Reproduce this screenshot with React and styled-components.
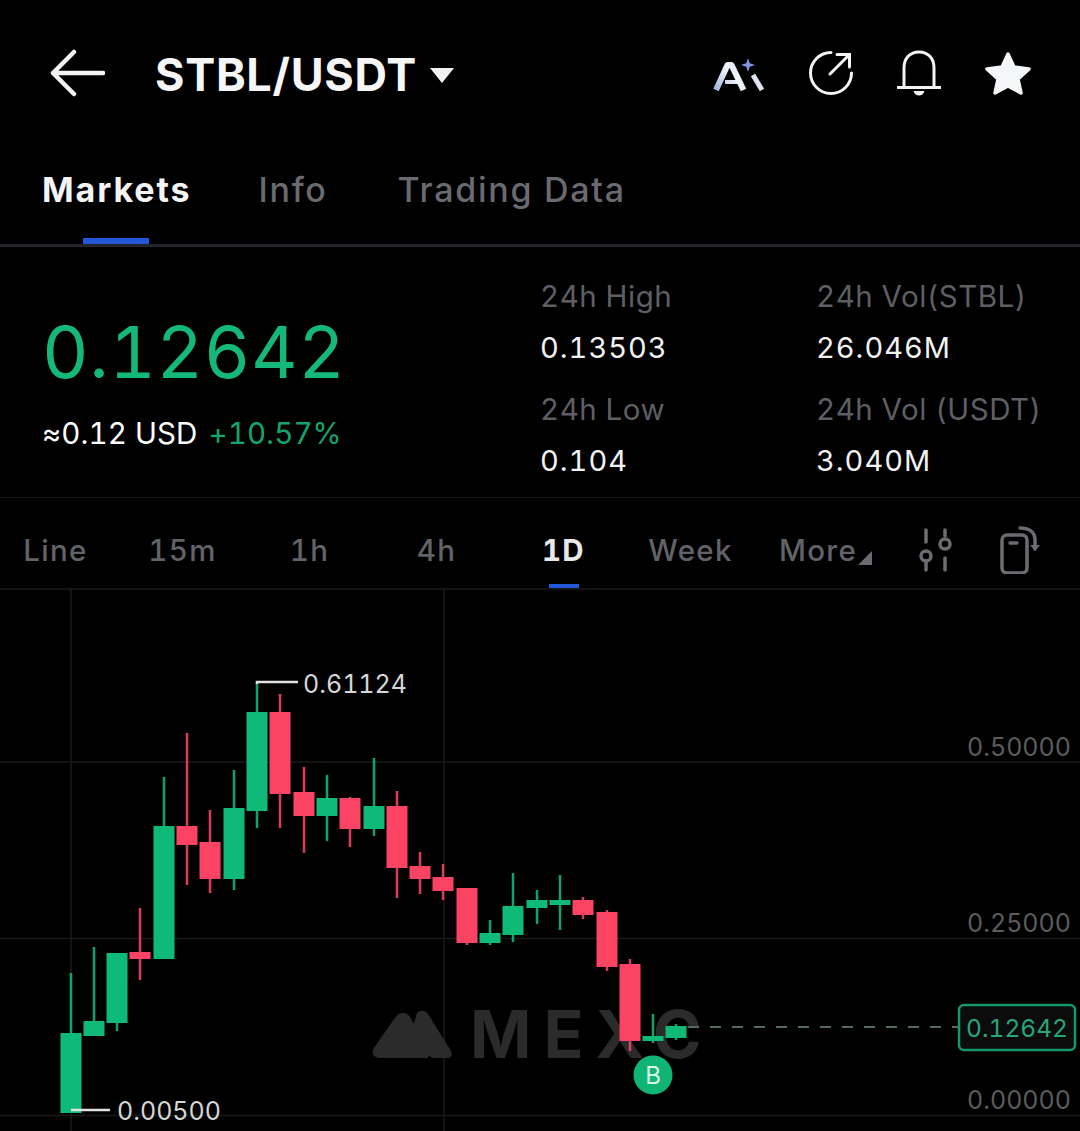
import React from "react";
import styled, { createGlobalStyle } from "styled-components";

const Global = createGlobalStyle`
  html, body { margin: 0; padding: 0; background: #000; }
  body {
    font-family: Inter, "Noto Sans", sans-serif;
    font-variant-numeric: tabular-nums;
    color: #fff;
    width: 1080px;
    height: 1131px;
    overflow: hidden;
  }
`;

const Page = styled.div`
  width: 1080px;
  height: 1131px;
  background: #000;
  display: flex;
  flex-direction: column;
  overflow: hidden;
`;

const Header = styled.header`
  height: 147px;
  display: flex;
  align-items: center;
  padding: 0 49px 1px 50px;
  box-sizing: border-box;
`;

const Title = styled.h1`
  margin: 3px 0 0 50px;
  font-size: 45px;
  font-weight: 700;
  letter-spacing: 0.7px;
  color: #f6f6f6;
`;

const Caret = styled.span`
  width: 0;
  height: 0;
  margin: 5px 0 0 13px;
  border-left: 12px solid transparent;
  border-right: 12px solid transparent;
  border-top: 15px solid #f2f2f2;
`;

const HeaderIcons = styled.div`
  margin-left: auto;
  display: flex;
  align-items: center;
  gap: 44px;
`;

const Tabs = styled.nav`
  height: 100px;
  display: flex;
  align-items: flex-start;
  gap: 67px;
  padding-left: 42px;
  border-bottom: 3px solid #24242a;
  box-sizing: border-box;
`;

const Tab = styled.div`
  position: relative;
  height: 97px;
  padding-top: 21px;
  box-sizing: border-box;
  font-size: 34px;
  line-height: 44px;
  letter-spacing: ${(p) => (p.$active ? "1.9px" : "1.7px")};
  font-weight: ${(p) => (p.$active ? 700 : 500)};
  color: ${(p) => (p.$active ? "#f4f4f4" : "#6a6b71")};
  &:last-child {
    margin-left: 3px;
  }
  &::after {
    content: "";
    display: ${(p) => (p.$active ? "block" : "none")};
    position: absolute;
    left: 41px;
    bottom: 0;
    width: 66px;
    height: 6px;
    background: #2258d8;
  }
`;

const Stats = styled.section`
  height: 251px;
  display: flex;
  box-sizing: border-box;
  border-bottom: 1px solid #141416;
`;

const PriceBlock = styled.div`
  width: 540px;
  padding: 62px 0 0 42px;
  box-sizing: border-box;
`;

const LastPrice = styled.div`
  font-size: 72px;
  line-height: 86px;
  font-weight: 400;
  color: #14b878;
  letter-spacing: 0.6px;
`;

const SubLine = styled.div`
  margin-top: 18px;
  display: flex;
  gap: 11px;
  font-size: 29.500px;
  line-height: 40px;
  letter-spacing: 0.1px;
`;

const Change = styled.span`
  color: #14a56d;
`;

const StatGrid = styled.div`
  display: grid;
  grid-template-columns: 276px 1fr;
  grid-auto-rows: 113px;
  padding-top: 29px;
`;

const Stat = styled.div`
  display: flex;
  flex-direction: column;
  gap: 12px;
`;

const StatLabel = styled.span`
  font-size: 29.500px;
  line-height: 40px;
  letter-spacing: 0.5px;
  color: #5e5f65;
  white-space: nowrap;
`;

const StatValue = styled.span`
  font-size: 29px;
  line-height: 40px;
  letter-spacing: 1px;
  color: #f2f2f2;
`;

const Periods = styled.div`
  height: 92px;
  display: flex;
  align-items: center;
  margin-left: -8px;
  box-sizing: border-box;
  border-bottom: 2px solid #141416;
`;

const Period = styled.div`
  position: relative;
  width: 127px;
  height: 100%;
  padding-top: 14px;
  box-sizing: border-box;
  display: flex;
  align-items: center;
  justify-content: center;
  font-size: 29.500px;
  letter-spacing: 1.3px;
  font-weight: ${(p) => (p.$active ? 700 : 500)};
  color: ${(p) => (p.$active ? "#e8e8e8" : "#626369")};
  &::after {
    content: "";
    display: ${(p) => (p.$active ? "block" : "none")};
    position: absolute;
    left: 49px;
    bottom: 0;
    width: 30px;
    height: 4px;
    background: #2258d8;
  }
`;

const MorePeriod = styled(Period)`
  justify-content: flex-start;
  padding-left: 25px;
`;

const MoreMark = styled.span`
  width: 0;
  height: 0;
  margin: 16px 0 0 1px;
  border-left: 14px solid transparent;
  border-bottom: 14px solid #6a6a70;
`;

const ToolIcons = styled.div`
  display: flex;
  align-items: center;
  gap: 48px;
  margin: 14px 0 0 38px;
`;

const Chart = styled.svg`
  display: block;
  width: 1080px;
  height: 541px;
  flex: none;
  font-family: Inter, "Noto Sans", sans-serif;
  font-variant-numeric: tabular-nums;
`;

const GREEN = "#0fba78";
const RED = "#fb4363";

// x, top of the body, bottom of the body, wick top, wick bottom, rising?
const candles = [
  [71, 1033, 1113, 973, 1113, 1],
  [94, 1021, 1036, 947, 1036, 1],
  [117, 953, 1023, 953, 1031, 1],
  [140, 952, 959, 908, 980, 0],
  [164, 826, 959, 777, 959, 1],
  [187, 826, 845, 733, 885, 0],
  [210, 842, 879, 810, 893, 0],
  [234, 808, 879, 770, 890, 1],
  [257, 712, 811, 682, 828, 1],
  [280, 712, 794, 694, 828, 0],
  [304, 792, 816, 767, 853, 0],
  [327, 798, 816, 775, 841, 1],
  [350, 798, 829, 797, 847, 0],
  [374, 806, 829, 758, 836, 1],
  [397, 806, 868, 791, 898, 0],
  [420, 866, 879, 852, 894, 0],
  [443, 877, 891, 864, 900, 0],
  [467, 888, 943, 888, 945, 0],
  [490, 933, 943, 920, 945, 1],
  [513, 906, 935, 873, 942, 1],
  [537, 900, 908, 890, 924, 1],
  [560, 900, 905, 875, 930, 1],
  [583, 900, 915, 897, 919, 0],
  [607, 912, 967, 910, 971, 0],
  [630, 964, 1041, 959, 1051, 0],
  [653, 1036, 1041, 1014, 1043, 1],
  [676, 1026, 1038, 1024, 1040, 1],
];

const axisLabels = [
  ["0.50000", 747],
  ["0.25000", 923],
  ["0.00000", 1100],
];

const BackIcon = () => (
  <svg width="55" height="48" viewBox="0 0 55 48" fill="none" stroke="#f4f4f4" strokeWidth="4.500" strokeLinecap="round" strokeLinejoin="round">
    <path d="M3 24H53M24 3 3 24l21 21" />
  </svg>
);

const AiIcon = () => (
  <svg width="52" height="40" viewBox="0 0 52 40">
    <defs>
      <linearGradient id="aiFill" gradientUnits="userSpaceOnUse" x1="0" y1="38" x2="32" y2="8">
        <stop offset="0" stopColor="#93acd8" />
        <stop offset="0.55" stopColor="#eef3fb" />
        <stop offset="1" stopColor="#e2e9f6" />
      </linearGradient>
    </defs>
    <path d="M3 37 14.500 12h4l12 25" fill="none" stroke="url(#aiFill)" strokeWidth="6" strokeLinejoin="round" />
    <path d="M12 29h13" stroke="url(#aiFill)" strokeWidth="4" />
    <path d="M40 22 49 37" stroke="#dfe6f2" strokeWidth="5" />
    <path d="M35 5l1.700 5.300L42 12l-5.300 1.700L35 19l-1.700-5.300L28 12l5.300-1.700z" fill="#7f97e8" />
  </svg>
);

const ShareIcon = () => (
  <svg width="44" height="44" viewBox="0 0 44 44" fill="none" stroke="#f4f4f4" strokeWidth="3" strokeLinecap="round">
    <path d="M22 1.500A20.500 20.500 0 1 0 42.500 22" />
    <path d="M21 23 40 4M28 3.500h12.500V16" strokeLinejoin="miter" />
  </svg>
);

const BellIcon = () => (
  <svg width="44" height="46" viewBox="0 0 44 46" fill="none" stroke="#f4f4f4" strokeWidth="3">
    <path d="M7 37V18C7 8 13 2 22 2s15 6 15 16v19" />
    <path d="M0 37.500h44" />
    <path d="M16.500 41h11c-1 3-3 4.500-5.500 4.500S17.500 44 16.500 41z" fill="#f4f4f4" stroke="none" />
  </svg>
);

const StarIcon = () => (
  <svg width="46" height="44" viewBox="0 0 46 44">
    <path
      d="M23 3l6 13 15 2-11 10 3 14-13-7-13 7 3-14L2 18l15-2z"
      fill="#f5f6f8"
      stroke="#f5f6f8"
      strokeWidth="3.500"
      strokeLinejoin="round"
    />
  </svg>
);

const SlidersIcon = () => (
  <svg width="33" height="44" viewBox="0 0 33 44" fill="none" stroke="#6c6c72" strokeWidth="3.500" strokeLinecap="round">
    <path d="M7 2v12M7 33v9M26 2v6M26 30v12" />
    <circle cx="7" cy="28" r="5" />
    <circle cx="26" cy="16" r="5" />
  </svg>
);

const RotateIcon = () => (
  <svg width="40" height="48" viewBox="0 0 40 48" fill="none" stroke="#6c6c72" strokeWidth="3.500" strokeLinecap="round" strokeLinejoin="round">
    <rect x="2" y="9" width="25" height="38" rx="5" />
    <path d="M10 17h7" />
    <path d="M20 2c8 0 15 3 15 12v9" />
    <path d="M30 19l5 6 5-6z" fill="#6c6c72" stroke="none" />
  </svg>
);

const Candle = ({ x, top, bottom, hi, lo, up }) => {
  const color = up ? GREEN : RED;
  return (
    <g>
      <rect x={x - 1.25} y={hi} width="2.500" height={lo - hi} fill={color} opacity="0.88" />
      <rect x={x - 10.5} y={top} width="21" height={bottom - top} fill={color} />
    </g>
  );
};

export default function App() {
  return (
    <Page>
      <Global />
      <Header>
        <BackIcon />
        <Title>STBL/USDT</Title>
        <Caret />
        <HeaderIcons>
          <AiIcon />
          <ShareIcon />
          <BellIcon />
          <StarIcon />
        </HeaderIcons>
      </Header>

      <Tabs>
        <Tab $active>Markets</Tab>
        <Tab>Info</Tab>
        <Tab>Trading Data</Tab>
      </Tabs>

      <Stats>
        <PriceBlock>
          <LastPrice>0.12642</LastPrice>
          <SubLine>
            <span>≈0.12 USD</span>
            <Change>+10.57%</Change>
          </SubLine>
        </PriceBlock>
        <StatGrid>
          <Stat>
            <StatLabel>24h High</StatLabel>
            <StatValue>0.13503</StatValue>
          </Stat>
          <Stat>
            <StatLabel>24h Vol(STBL)</StatLabel>
            <StatValue>26.046M</StatValue>
          </Stat>
          <Stat>
            <StatLabel>24h Low</StatLabel>
            <StatValue>0.104</StatValue>
          </Stat>
          <Stat>
            <StatLabel>24h Vol (USDT)</StatLabel>
            <StatValue>3.040M</StatValue>
          </Stat>
        </StatGrid>
      </Stats>

      <Periods>
        <Period>Line</Period>
        <Period>15m</Period>
        <Period>1h</Period>
        <Period>4h</Period>
        <Period $active>1D</Period>
        <Period>Week</Period>
        <MorePeriod>
          More
          <MoreMark />
        </MorePeriod>
        <ToolIcons>
          <SlidersIcon />
          <RotateIcon />
        </ToolIcons>
      </Periods>

      <Chart viewBox="0 590 1080 541">
        {/* grid */}
        <g stroke="#1a1a1c" strokeWidth="1.500">
          <path d="M0 762H1080M0 938.500H1080M0 1115.500H1080" />
          <path d="M71 590V1131M444 590V1131" />
        </g>

        {/* watermark */}
        <g fill="#2b2b2c">
          <path
            d="M403 1014c3 0 5 1 7 5l19 34-2 4h-47c-6 0-8-4-5-9l21-30c2-3 4-4 7-4z"
            stroke="#2b2b2c"
            strokeWidth="2"
            strokeLinejoin="round"
          />
          <path d="M417 1013c3-3 9-3 11 1l23 37c2 4 0 7-4 7h-13c-3 0-4-1-5-3l-15-26c-1-2-1-4 0-6z" />
          <text x="470" y="1058" fontSize="66" fontWeight="700" letterSpacing="12">MEXC</text>
        </g>

        {/* candles */}
        {candles.map(([x, top, bottom, hi, lo, up]) => (
          <Candle key={x} x={x} top={top} bottom={bottom} hi={hi} lo={lo} up={up} />
        ))}

        {/* high and low markers */}
        <g stroke="#e2e2e2" strokeWidth="2.500" fill="none">
          <path d="M257 684V682H298" />
          <path d="M71 1110H110" />
        </g>
        <g fill="#d6d6d6" fontSize="25">
          <text x="303" y="693">0.61124</text>
          <text x="117" y="1120">0.00500</text>
        </g>

        {/* price axis */}
        <g fill="#5c5c5e" fontSize="25" textAnchor="end">
          {axisLabels.map(([label, y]) => (
            <text key={label} x="1071" y={y + 9}>{label}</text>
          ))}
        </g>

        {/* last price tag */}
        <path d="M688 1027H958" stroke="#6f8f83" strokeWidth="1.500" strokeDasharray="11 11" />
        <rect x="959" y="1005" width="116" height="45" rx="5" fill="#0c0c0c" stroke="#149a68" strokeWidth="2.500" />
        <text x="1017" y="1037" fill="#27a67a" fontSize="24.500" textAnchor="middle">0.12642</text>

        {/* buy marker */}
        <circle cx="653" cy="1075" r="19.500" fill="#10b474" />
        <text x="653" y="1084" fill="#d9f5e9" fontSize="24" textAnchor="middle">B</text>
      </Chart>
    </Page>
  );
}
